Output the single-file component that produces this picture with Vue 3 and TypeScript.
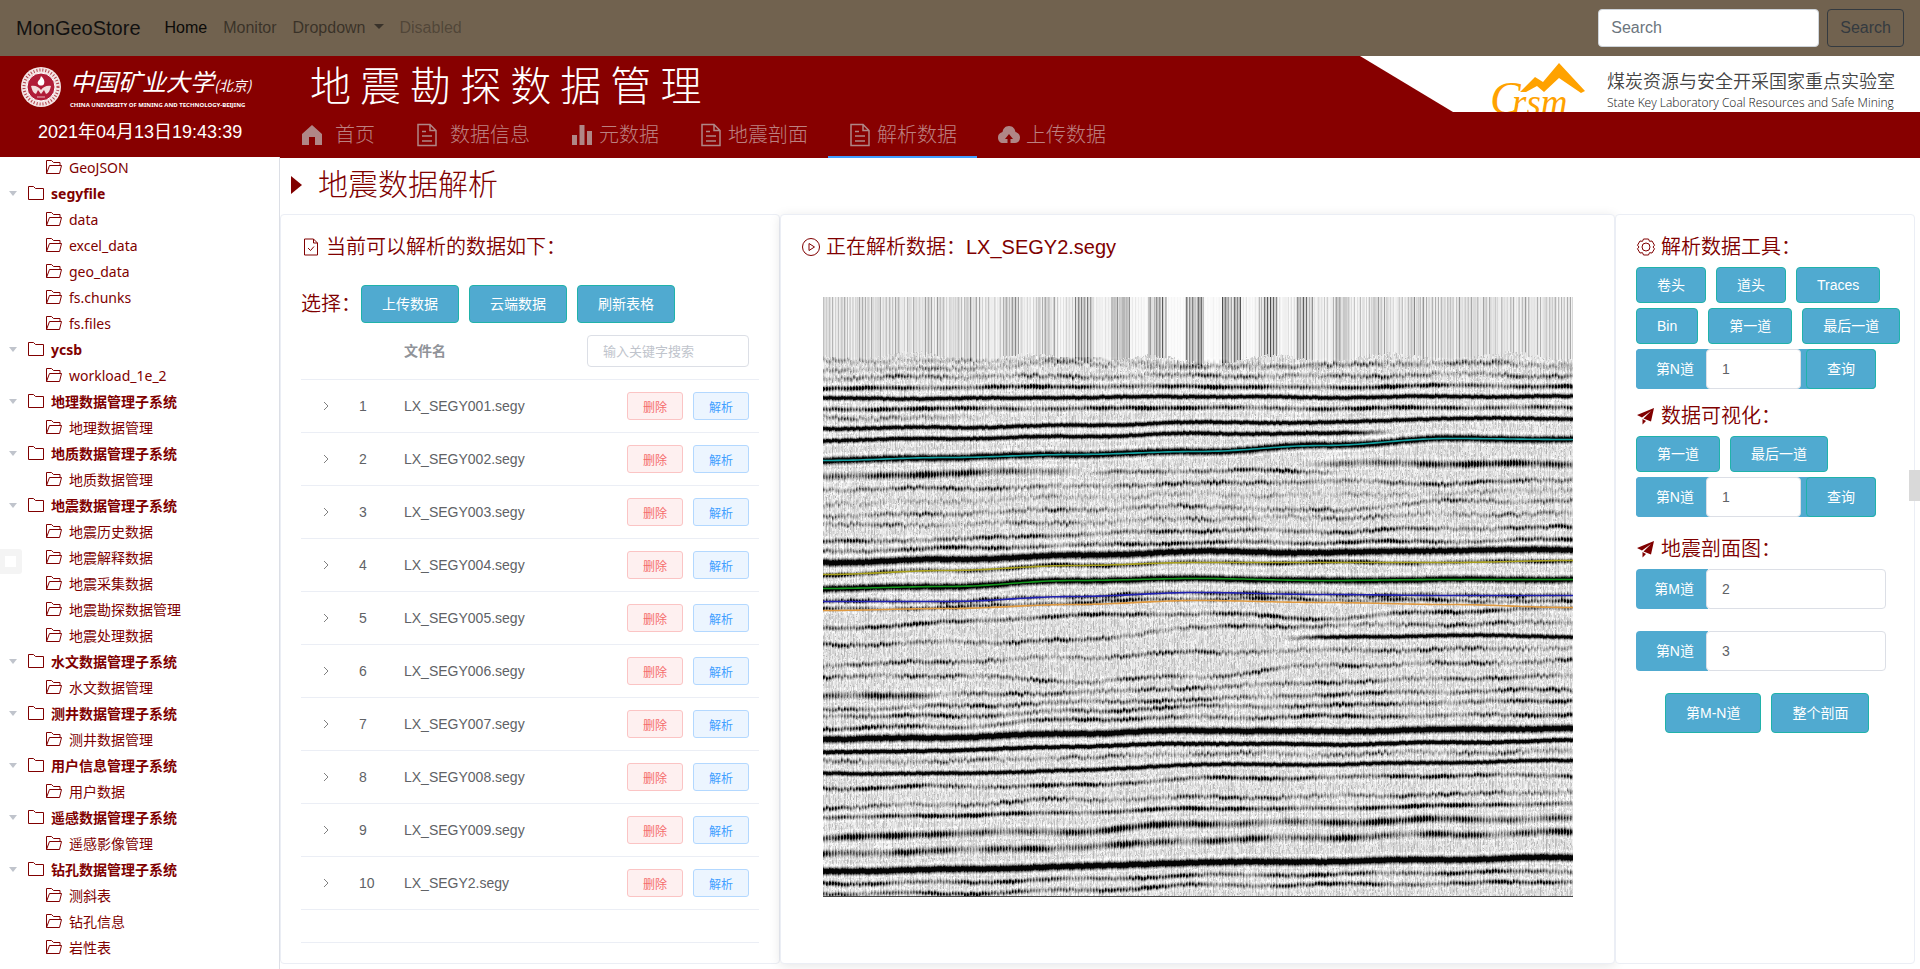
<script setup lang="ts">
import { onMounted, ref } from 'vue'

interface TreeNode {
  label: string
  root?: boolean
}

const tree: TreeNode[] = [
  { label: 'GeoJSON' },
  { label: 'segyfile', root: true },
  { label: 'data' },
  { label: 'excel_data' },
  { label: 'geo_data' },
  { label: 'fs.chunks' },
  { label: 'fs.files' },
  { label: 'ycsb', root: true },
  { label: 'workload_1e_2' },
  { label: '地理数据管理子系统', root: true },
  { label: '地理数据管理' },
  { label: '地质数据管理子系统', root: true },
  { label: '地质数据管理' },
  { label: '地震数据管理子系统', root: true },
  { label: '地震历史数据' },
  { label: '地震解释数据' },
  { label: '地震采集数据' },
  { label: '地震勘探数据管理' },
  { label: '地震处理数据' },
  { label: '水文数据管理子系统', root: true },
  { label: '水文数据管理' },
  { label: '测井数据管理子系统', root: true },
  { label: '测井数据管理' },
  { label: '用户信息管理子系统', root: true },
  { label: '用户数据' },
  { label: '遥感数据管理子系统', root: true },
  { label: '遥感影像管理' },
  { label: '钻孔数据管理子系统', root: true },
  { label: '测斜表' },
  { label: '钻孔信息' },
  { label: '岩性表' },
]

const menu = [
  { label: '首页', icon: 'home', wide: true },
  { label: '数据信息', icon: 'doc', wide: true },
  { label: '元数据', icon: 'bars' },
  { label: '地震剖面', icon: 'doc' },
  { label: '解析数据', icon: 'doc', active: true },
  { label: '上传数据', icon: 'cloud' },
]

const files = [
  'LX_SEGY001.segy',
  'LX_SEGY002.segy',
  'LX_SEGY003.segy',
  'LX_SEGY004.segy',
  'LX_SEGY005.segy',
  'LX_SEGY006.segy',
  'LX_SEGY007.segy',
  'LX_SEGY008.segy',
  'LX_SEGY009.segy',
  'LX_SEGY2.segy',
]

const traceNo = ref('1')
const viewNo = ref('1')
const sectionM = ref('2')
const sectionN = ref('3')
const navKeyword = ref('')
const keyword = ref('')

const section = ref<HTMLCanvasElement | null>(null)

/* A reflector: depths at seven evenly spaced traces, strength, thickness,
   and the stretch of the section in which it is visible. */
interface Reflector {
  y: number[]
  s: number
  t: number
  from?: number
  to?: number
}

const reflectors: Reflector[] = [
  { y: [63, 64, 62, 67, 69, 64, 70], s: 0.25, t: 2 },
  { y: [72, 71, 66, 70, 68, 66, 67], s: 0.35, t: 2 },
  { y: [81, 79, 79, 78, 79, 77, 78], s: 0.55, t: 2 },
  { y: [91, 90, 89, 89, 90, 88, 89], s: 1.05, t: 2 },
  { y: [101, 101, 100, 99, 100, 99, 99], s: 1.2, t: 2 },
  { y: [112, 111, 111, 110, 111, 110, 110], s: 1.05, t: 2 },
  { y: [120, 120, 120, 119, 119, 118, 118], s: 0.4, t: 2, to: 170 },
  { y: [131, 130, 128, 125, 125, 121, 121], s: 1.2, t: 2 },
  { y: [143, 141, 139, 136, 136, 132, 130], s: 1.2, t: 2, to: 570 },
  { y: [163, 160, 157, 154, 148, 141, 142], s: 1.4, t: 3 },
  { y: [180, 176, 173, 167, 167, 166, 167], s: 1, t: 3, to: 255 },
  { y: [180, 178, 176, 173, 174, 176, 178], s: 0.8, t: 2, from: 260, to: 520 },
  { y: [180, 176, 168, 166, 166, 166, 167], s: 1, t: 3, from: 480 },
  { y: [192, 191, 189, 186, 184, 186, 182], s: 0.65, t: 2 },
  { y: [206, 204, 200, 197, 198, 196, 192], s: 0.25, t: 2 },
  { y: [219, 216, 212, 209, 213, 204, 203], s: 0.55, t: 2 },
  { y: [228, 227, 225, 221, 220, 217, 216], s: 0.45, t: 2 },
  { y: [244, 242, 237, 233, 234, 231, 230], s: 0.75, t: 2 },
  { y: [254, 251, 248, 245, 245, 244, 242], s: 0.85, t: 2 },
  { y: [265, 262, 258, 254, 255, 253, 252], s: 1.4, t: 3 },
  { y: [277, 273, 268, 265, 265, 265, 263], s: 1, t: 2 },
  { y: [291, 289, 283, 281, 283, 282, 282], s: 1.35, t: 3 },
  { y: [304, 304, 299, 295, 297, 298, 298], s: 0.8, t: 2 },
  { y: [312, 310, 305, 301, 302, 303, 304], s: 0.8, t: 2 },
  { y: [331, 325, 318, 316, 321, 314, 311], s: 0.85, t: 2 },
  { y: [347, 345, 343, 330, 328, 327, 325], s: 0.65, t: 2 },
  { y: [352, 350, 346, 342, 340, 338, 339], s: 1.15, t: 2, from: 460 },
  { y: [368, 364, 360, 355, 353, 352, 350], s: 0.6, t: 2 },
  { y: [380, 378, 384, 379, 368, 366, 363], s: 0.65, t: 2 },
  { y: [399, 397, 395, 389, 383, 380, 377], s: 1, t: 3, to: 120 },
  { y: [399, 397, 395, 390, 385, 381, 379], s: 0.65, t: 2, from: 90 },
  { y: [412, 409, 405, 402, 397, 394, 392], s: 0.7, t: 2 },
  { y: [418, 419, 414, 409, 408, 405, 403], s: 0.75, t: 2 },
  { y: [431, 429, 422, 420, 419, 418, 417], s: 0.8, t: 2 },
  { y: [442, 440, 436, 433, 434, 432, 431], s: 1.45, t: 3 },
  { y: [455, 453, 449, 446, 447, 445, 443], s: 1.4, t: 2 },
  { y: [464, 464, 460, 456, 457, 455, 454], s: 0.5, t: 2 },
  { y: [476, 476, 473, 467, 467, 465, 463], s: 1.15, t: 2 },
  { y: [491, 489, 488, 481, 480, 478, 478], s: 0.9, t: 2 },
  { y: [510, 507, 502, 500, 499, 497, 494], s: 0.65, t: 2 },
  { y: [520, 518, 515, 511, 511, 508, 506], s: 1.05, t: 2 },
  { y: [541, 536, 534, 526, 525, 522, 521], s: 1, t: 3 },
  { y: [557, 553, 550, 543, 540, 537, 535], s: 0.9, t: 3 },
  { y: [574, 572, 569, 565, 564, 562, 560], s: 1.5, t: 3 },
  { y: [586, 585, 582, 578, 577, 575, 574], s: 0.85, t: 2 },
  { y: [596, 596, 593, 588, 587, 586, 584], s: 0.85, t: 2 },
]

const picks = [
  { color: '#14a0a0', y: [163, 160, 157, 154, 148, 141, 142] },
  { color: '#a8a01c', y: [277, 273, 268, 265, 265, 265, 263] },
  { color: '#12961c', y: [291, 289, 283, 281, 283, 282, 282] },
  { color: '#2020b4', y: [304, 304, 299, 295, 297, 298, 298] },
  { color: '#e09a40', y: [313, 311, 307, 303, 305, 307, 310] },
]

const STEP = 125

function depthAt(y: number[], x: number): number {
  const i = Math.min(5, Math.floor(x / STEP))
  const f = x / STEP - i
  const k = (1 - Math.cos(f * Math.PI)) / 2
  return y[i] * (1 - k) + y[i + 1] * k
}

function makeRandom(seed: number): () => number {
  let a = seed
  return () => {
    a = (a + 0x6d2b79f5) | 0
    let t = Math.imul(a ^ (a >>> 15), 1 | a)
    t = (t + Math.imul(t ^ (t >>> 7), 61 | t)) ^ t
    return ((t ^ (t >>> 14)) >>> 0) / 4294967296
  }
}

onMounted(() => {
  const canvas = section.value
  const ctx = canvas?.getContext('2d')
  if (!canvas || !ctx) return
  const w = canvas.width
  const h = canvas.height
  const rnd = makeRandom(20210413)
  const dark = new Float32Array(w * h)

  for (let x = 0; x < w; x++) {
    const trace = x % 3 === 0 ? 1 : x % 3 === 1 ? 0.6 : 0.35
    const cluster = x > 140 && x < 620 && (x + 8) % 37 < 19
    const mid = Math.max(0, 1 - Math.abs(x - 370) / 260)
    const base = cluster ? 0.14 + 0.12 * mid : 0.13 - 0.12 * mid
    const stripe = base * (0.3 + rnd() * 1) + (x % 3 === 0 ? base * rnd() * 2 : 0)
    const top = 57 + 4 * Math.sin(x / 19) + 4 * mid + rnd() * 4
    let run = rnd()
    for (let y = 0; y < h; y++) {
      if (y < top) {
        dark[y * w + x] = stripe
        continue
      }
      if (rnd() < 0.45) run = rnd()
      dark[y * w + x] = 0.04 + run * 0.18 * (0.5 + trace)
    }
  }

  reflectors.forEach((r, n) => {
    const weak = Math.max(0, 1 - r.s)
    const from = r.from ?? 0
    const to = r.to ?? w
    let jitter = 0
    for (let x = from; x < to; x++) {
      if (x % 3 === 0) jitter = (rnd() - 0.5) * (0.8 + 4 * weak)
      const rise = r.from ? Math.min(1, (x - from) / 50) : 1
      const fall = r.to ? Math.min(1, (to - x) / 50) : 1
      const trace = x % 3 === 0 ? 1 : x % 3 === 1 ? 0.75 : 0.4
      const wave = 0.75 + 0.3 * Math.sin(x / (17 + (n % 7) * 4) + n * 2.3)
      const fade = 0.8 + 0.25 * Math.sin(x / 7 + n * 5)
      const amp = r.s * rise * fall * (r.s > 1.1 ? 0.75 + 0.25 * trace : trace * wave * fade * 1.4)
      const c = depthAt(r.y, x) + jitter + (r.s > 1 ? 0.4 : 0.9) * Math.sin(x / 23 + n)
      for (let y = Math.floor(c - 7); y <= c + 7; y++) {
        if (y < 60 || y >= h) continue
        const d = (y - c) / r.t
        const side = Math.abs(d) - 2
        dark[y * w + x] += amp * Math.exp(-d * d) - 0.06 * r.s * Math.exp(-side * side * 2)
      }
    }
  })

  const image = ctx.createImageData(w, h)
  for (let i = 0; i < w * h; i++) {
    const v = Math.max(4, Math.min(253, Math.round(255 * (1 - dark[i]))))
    image.data[i * 4] = v
    image.data[i * 4 + 1] = v
    image.data[i * 4 + 2] = v
    image.data[i * 4 + 3] = 255
  }
  ctx.putImageData(image, 0, 0)

  picks.forEach((p) => {
    ctx.strokeStyle = p.color
    ctx.lineWidth = 1.6
    ctx.beginPath()
    for (let x = 0; x <= w; x += 5) ctx.lineTo(x, depthAt(p.y, x) + 0.5)
    ctx.stroke()
  })
  ctx.fillStyle = '#444'
  ctx.fillRect(0, h - 1, w, 1)
})
</script>

<template>
  <div class="page">
    <nav class="navbar">
      <a class="brand" href="#">MonGeoStore</a>
      <a class="nav-link current" href="#">Home</a>
      <a class="nav-link" href="#">Monitor</a>
      <a class="nav-link" href="#">Dropdown<span class="caret"></span></a>
      <a class="nav-link disabled" href="#">Disabled</a>
      <form class="nav-search" @submit.prevent>
        <input v-model="navKeyword" type="search" placeholder="Search" aria-label="Search" />
        <button type="submit">Search</button>
      </form>
    </nav>

    <div class="shell">
      <aside class="sidebar">
        <div class="school">
          <div class="school-logo">
            <svg class="seal" viewBox="0 0 42 42" aria-hidden="true">
              <circle cx="21" cy="21" r="20" fill="#f3e4e4" />
              <circle cx="21" cy="21" r="17" fill="none" stroke="#b4404a" stroke-width="3" stroke-dasharray="1 2" />
              <circle cx="21" cy="21" r="14" fill="#b01c38" stroke="#fff" stroke-width="1" />
              <path d="M21 10c3 3 4 5 3 8-1 2-5 2-6 0s1-4 2-5z" fill="#fff" />
              <path d="M11 20c4-1 8 1 10 4 2-3 6-5 10-4-1 4-2 7-5 8l-2-4-3 4-3-4-2 4c-3-1-4-4-5-8z" fill="#f3dede" />
              <path d="M17 31h8" stroke="#e8b8c0" stroke-width="1" />
            </svg>
            <div class="school-text">
              <div class="school-name">中国矿业大学<small>(北京)</small></div>
              <div class="school-en">CHINA UNIVERSITY OF MINING AND TECHNOLOGY-BEIJING</div>
            </div>
          </div>
          <div class="clock">2021年04月13日19:43:39</div>
        </div>
        <ul class="tree">
          <li v-for="node in tree" :key="node.label" :class="{ root: node.root }">
            <span v-if="node.root" class="tree-caret"></span>
            <svg v-if="node.root" class="folder" viewBox="0 0 16 14" aria-hidden="true">
              <path d="M.5 13.500V.5h5l2 2h8v11z" />
            </svg>
            <svg v-else class="folder" viewBox="0 0 16 14" aria-hidden="true">
              <path d="M.5 13.500V.5h5l2 2h6.500v3M.5 13.500l3-8h12l-2 8z" />
            </svg>
            <span>{{ node.label }}</span>
          </li>
        </ul>
      </aside>

      <main class="main">
        <header class="banner">
          <h1>地 震 勘 探 数 据 管 理</h1>
          <div class="lab">
            <svg class="lab-logo" viewBox="0 0 100 56" aria-hidden="true">
              <path d="M30 36 45 21l8 5L69 7l26 28-4 2-22-15-15 14-7-6-11 6z" fill="#ffa200" />
              <text x="0" y="58" font-size="46" class="script">C</text>
              <text x="22" y="59" font-size="37" class="script">rsm</text>
            </svg>
            <div class="lab-text">
              <div class="lab-cn">煤炭资源与安全开采国家重点实验室</div>
              <div class="lab-en">State Key Laboratory Coal Resources and Safe Mining</div>
            </div>
          </div>
          <nav class="menu">
            <a v-for="m in menu" :key="m.label" href="#" :class="{ active: m.active, wide: m.wide }">
              <svg v-if="m.icon === 'home'" viewBox="0 0 24 24" aria-hidden="true">
                <path d="M12 2 2 11v11h7v-8h6v8h7V11z" fill="currentColor" />
              </svg>
              <svg v-else-if="m.icon === 'doc'" viewBox="0 0 24 24" aria-hidden="true">
                <path d="M3 1.500h12l6 6v15H3zM15 1.500v6h6M7 8.500h4M7 13h10M7 18h10" fill="none" stroke="currentColor" stroke-width="1.500" />
              </svg>
              <svg v-else-if="m.icon === 'bars'" viewBox="0 0 24 24" aria-hidden="true">
                <path d="M2 12h5v10H2zM9.500 2h5v20h-5zM17 8h5v14h-5z" fill="currentColor" />
              </svg>
              <svg v-else viewBox="0 0 24 24" aria-hidden="true">
                <path fill-rule="evenodd" d="M12 3c4 0 6 3 6.500 6C22 10 23 12 23 14.500 23 18 21 20 18 20h-4.500v-4H16l-4-5-4 5h2.500v4H6c-3 0-5-2-5-5.500C1 12 2 10 5.500 9 6 6 8 3 12 3z" fill="currentColor" />
              </svg>
              <span>{{ m.label }}</span>
            </a>
          </nav>
        </header>

        <h2 class="page-title">地震数据解析</h2>

        <div class="cards">
          <section class="card list">
            <h3>
              <svg viewBox="0 0 20 20" aria-hidden="true">
                <path d="M3.500 2h9l4 4v12h-13zM12.500 2v4h4M7 11l2.500 2.500L13 9.500" />
              </svg>
              当前可以解析的数据如下：
            </h3>
            <div class="choose">
              <span>选择：</span>
              <button class="btn tall">上传数据</button>
              <button class="btn tall">云端数据</button>
              <button class="btn tall">刷新表格</button>
            </div>
            <div class="table-box">
              <table>
                <thead>
                  <tr>
                    <th class="c-open"></th>
                    <th class="c-no"></th>
                    <th>文件名</th>
                    <th class="c-ops">
                      <input v-model="keyword" class="filter" type="text" placeholder="输入关键字搜索" aria-label="输入关键字搜索" />
                    </th>
                  </tr>
                </thead>
                <tbody>
                  <tr v-for="(f, i) in files" :key="f">
                    <td class="c-open">
                      <svg viewBox="0 0 12 12" aria-hidden="true"><path d="m4 2 4 4-4 4" /></svg>
                    </td>
                    <td>{{ i + 1 }}</td>
                    <td>{{ f }}</td>
                    <td class="c-ops">
                      <button class="mini danger">删除</button>
                      <button class="mini primary">解析</button>
                    </td>
                  </tr>
                </tbody>
              </table>
            </div>
          </section>

          <section class="card view">
            <h3>
              <svg viewBox="0 0 20 20" aria-hidden="true">
                <circle cx="10" cy="10" r="8.500" />
                <path d="m8 6.500 5.500 3.500L8 13.500z" />
              </svg>
              正在解析数据：LX_SEGY2.segy
            </h3>
            <canvas ref="section" width="750" height="600" role="img" aria-label="LX_SEGY2.segy"></canvas>
          </section>

          <section class="card tools">
            <h3>
              <svg viewBox="0 0 20 20" aria-hidden="true">
                <path d="M7.500 2h5l1 2.300 2.500-.3 2.500 4.200L17 10l1.500 1.800L16 16l-2.500-.3-1 2.300h-5l-1-2.300L4 16l-2.500-4.200L3 10 1.500 8.200 4 4l2.500.3z" />
                <circle cx="10" cy="10" r="4" />
              </svg>
              解析数据工具：
            </h3>
            <div class="row">
              <button class="btn">卷头</button>
              <button class="btn">道头</button>
              <button class="btn">Traces</button>
            </div>
            <div class="row">
              <button class="btn">Bin</button>
              <button class="btn">第一道</button>
              <button class="btn">最后一道</button>
            </div>
            <div class="group query">
              <label for="trace-no">第N道</label>
              <input id="trace-no" v-model="traceNo" type="text" />
              <button class="btn">查询</button>
            </div>

            <h3 class="second">
              <svg class="solid" viewBox="0 0 20 20" aria-hidden="true">
                <path d="M18 2 1 9l5 2.500L15 5 7.500 12.500l7.500 3zM6.500 13v5.500L10 15z" />
              </svg>
              数据可视化：
            </h3>
            <div class="row">
              <button class="btn">第一道</button>
              <button class="btn">最后一道</button>
            </div>
            <div class="group query">
              <label for="view-no">第N道</label>
              <input id="view-no" v-model="viewNo" type="text" />
              <button class="btn">查询</button>
            </div>

            <h3 class="third">
              <svg class="solid" viewBox="0 0 20 20" aria-hidden="true">
                <path d="M18 2 1 9l5 2.500L15 5 7.500 12.500l7.500 3zM6.500 13v5.500L10 15z" />
              </svg>
              地震剖面图：
            </h3>
            <div class="group range">
              <label for="section-m">第M道</label>
              <input id="section-m" v-model="sectionM" type="text" />
            </div>
            <div class="group range">
              <label for="section-n">第N道</label>
              <input id="section-n" v-model="sectionN" type="text" />
            </div>
            <div class="row final">
              <button class="btn">第M-N道</button>
              <button class="btn">整个剖面</button>
            </div>
          </section>
        </div>
      </main>
    </div>

    <div class="drag-handle"></div>
    <div class="side-tab"></div>
  </div>
</template>

<style>
body {
  margin: 0;
  background: #fff;
}
</style>

<style scoped>
.page,
.page * {
  box-sizing: border-box;
}

.page {
  position: relative;
  min-height: 100vh;
  display: flex;
  flex-direction: column;
  overflow: hidden;
  font-family: "Liberation Sans", "Noto Sans CJK SC", sans-serif;
  font-size: 14px;
}

button,
input {
  font-family: inherit;
  margin: 0;
}

input {
  outline: none;
}

h1,
h2,
h3,
ul {
  margin: 0;
  padding: 0;
  font-weight: 300;
}

a {
  text-decoration: none;
}

.navbar {
  display: flex;
  align-items: center;
  height: 56px;
  padding: 0 16px;
  background: #71624f;
  font-size: 16px;
  line-height: 24px;
}

.brand {
  margin-right: 16px;
  font-size: 20px;
  color: #111;
}

.nav-link {
  padding: 0 8px;
  color: rgba(0, 0, 0, 0.5);
}

.nav-link.current {
  color: #0b0a08;
}

.nav-link.disabled {
  color: rgba(0, 0, 0, 0.3);
}

.caret {
  display: inline-block;
  margin-left: 8px;
  vertical-align: 4px;
  border: 5px solid transparent;
  border-top-color: #39322a;
  border-bottom: 0;
}

.nav-search {
  display: flex;
  gap: 8px;
  margin-left: auto;
}

.nav-search input {
  width: 221px;
  height: 38px;
  padding: 0 12px;
  border: 1px solid #ced4da;
  border-radius: 4px;
  background: #fff;
  font-size: 16px;
}

.nav-search input::placeholder {
  color: #6c757d;
}

.nav-search button {
  height: 38px;
  padding: 0 12px;
  border: 1px solid #343a40;
  border-radius: 4px;
  background: transparent;
  color: #343a40;
  font-size: 16px;
}

.shell {
  flex: 1;
  display: flex;
}

.sidebar {
  flex: 0 0 280px;
  border-right: 1px solid #dcdfe6;
}

.school {
  position: relative;
  height: 101px;
  margin-right: -1px;
  padding-top: 10px;
  background: #870000;
  color: #fff;
}

.school-logo {
  display: flex;
  gap: 8px;
  padding-left: 20px;
}

.seal {
  width: 42px;
  height: 42px;
}

.school-text {
  white-space: nowrap;
}

.school-name {
  font-family: "Noto Sans CJK SC", sans-serif;
  font-size: 24px;
  line-height: 30px;
  font-style: italic;
}

.school-name small {
  font-size: 14px;
}

.school-en {
  font-family: "Noto Sans", sans-serif;
  font-size: 6px;
  line-height: 10px;
  font-weight: 700;
}

.clock {
  margin-top: 10px;
  padding-left: 38px;
  font-size: 18px;
  line-height: 24px;
}

.tree {
  margin-top: -3px;
  list-style: none;
  color: #800000;
  font-family: "Noto Sans", "Noto Sans CJK SC", sans-serif;
  font-size: 14px;
  font-weight: 400;
}

.tree li {
  display: flex;
  align-items: center;
  height: 26px;
  padding-left: 46px;
}

.tree li.root {
  padding-left: 9px;
  font-weight: 700;
}

.tree-caret {
  margin-right: 11px;
  border: 4px solid transparent;
  border-top: 5px solid #c0c4cc;
  border-bottom: 0;
}

.folder {
  width: 16px;
  height: 14px;
  margin-right: 7px;
  fill: none;
  stroke: currentColor;
}

.main {
  flex: 1;
  min-width: 0;
}

.banner {
  display: grid;
  grid-template: 56px 46px / 1fr 560px;
  background: #870000;
}

.banner h1 {
  padding-left: 30px;
  font-family: "Noto Sans CJK SC", sans-serif;
  font-size: 41px;
  line-height: 54px;
  color: #fff;
  white-space: nowrap;
}

.lab {
  display: flex;
  gap: 17px;
  height: 56px;
  overflow: hidden;
  padding-left: 130px;
  background: #fff;
  clip-path: polygon(0 0, 100% 0, 100% 100%, 93px 100%);
  color: #444;
  white-space: nowrap;
}

.lab-logo {
  flex: none;
  width: 100px;
  height: 56px;
}

.script {
  font-family: "Liberation Serif", serif;
  font-style: italic;
  fill: #ffa200;
}

.lab-cn {
  margin-top: 14px;
  font-size: 18px;
  line-height: 24px;
  font-weight: 350;
}

.lab-en {
  font-family: "Open Sans", sans-serif;
  font-size: 12px;
  line-height: 18px;
  font-weight: 300;
  color: #111;
}

.menu {
  grid-column: 1 / -1;
  display: flex;
}

.menu a {
  display: flex;
  align-items: center;
  gap: 5px;
  padding: 2px 20px 0;
  border-bottom: 2px solid transparent;
  color: #bc8080;
  font-size: 20px;
  line-height: 40px;
  font-weight: 300;
}

.menu a.wide {
  gap: 11px;
}

.menu a.active {
  border-color: #409eff;
}

.menu svg {
  width: 24px;
  height: 24px;
  color: #b08686;
}

.page-title {
  display: flex;
  align-items: center;
  gap: 16px;
  height: 56px;
  padding: 0 0 2px 11px;
  font-size: 30px;
  line-height: 44px;
  color: #800000;
}

.page-title::before {
  content: "";
  border: 9px solid transparent;
  border-left: 11px solid #800000;
  border-right: 0;
}

.cards {
  display: flex;
  padding: 0 5px 5px 0;
}

.card {
  padding: 20px;
  border: 1px solid #ebeef5;
  border-radius: 4px;
  background: #fff;
}

.list {
  flex: 0 0 500px;
}

.view {
  flex: 1;
  min-width: 0;
  box-shadow: 0 2px 12px rgba(0, 0, 0, 0.1);
}

.tools {
  flex: 0 0 300px;
  min-width: 0;
}

.card h3 {
  display: flex;
  align-items: center;
  gap: 5px;
  font-size: 20px;
  line-height: 24px;
  font-weight: 350;
  color: #800000;
  white-space: nowrap;
}

.card h3 svg {
  width: 20px;
  height: 20px;
  fill: none;
  stroke: currentColor;
}

.card h3 svg.solid {
  fill: currentColor;
  stroke: none;
}

.view canvas {
  display: block;
  max-width: 100%;
  margin: 38px auto 0;
}

.btn {
  height: 36px;
  padding: 0 20px;
  border: 1px solid #20b2aa;
  border-radius: 4px;
  background: #50aad0;
  color: #fff;
  font-size: 14px;
  line-height: 20px;
  white-space: nowrap;
}

.btn.tall {
  height: 38px;
}

.choose {
  display: flex;
  align-items: center;
  gap: 10px;
  margin-top: 26px;
  color: #800000;
  font-size: 20px;
  line-height: 24px;
  font-weight: 350;
}

.choose span {
  width: 50px;
  white-space: nowrap;
}

.table-box {
  height: 620px;
  border-bottom: 1px solid #ebeef5;
}

table {
  width: 100%;
  table-layout: fixed;
  border-collapse: separate;
  border-spacing: 0;
  color: #606266;
}

th,
td {
  height: 53px;
  padding: 0 10px;
  border-bottom: 1px solid #ebeef5;
  text-align: left;
  line-height: 23px;
  white-space: nowrap;
}

th {
  height: 57px;
  color: #909399;
}

.c-open {
  width: 48px;
}

.c-no {
  width: 45px;
}

.c-ops {
  width: 182px;
  text-align: right;
}

td.c-open {
  padding: 0 0 0 19px;
}

td.c-open svg {
  display: block;
  width: 12px;
  height: 12px;
  fill: none;
  stroke: #808080;
}

.filter {
  display: block;
  width: 100%;
  height: 32px;
  padding: 0 15px;
  border: 1px solid #dcdfe6;
  border-radius: 4px;
  font-size: 13px;
}

.filter::placeholder {
  color: #c0c4cc;
}

td.c-ops {
  font-size: 0;
}

.mini {
  width: 56px;
  height: 28px;
  padding: 0;
  border: 1px solid;
  border-radius: 3px;
  font-size: 12px;
  vertical-align: middle;
}

.mini + .mini {
  margin-left: 10px;
}

.danger {
  background: #fef0f0;
  border-color: #fbc4c4;
  color: #f56c6c;
}

.primary {
  background: #ecf5ff;
  border-color: #b3d8ff;
  color: #409eff;
}

.row {
  display: flex;
  gap: 10px;
  margin-top: 5px;
}

.card h3 + .row,
.card h3 + .group {
  margin-top: 8px;
}

.group {
  display: flex;
  height: 40px;
  margin-top: 5px;
  border-radius: 4px;
}

.group label {
  flex: 0 0 72px;
  margin-right: -2px;
  padding-right: 14px;
  border-radius: 4px 0 0 4px;
  background: #50aad0;
  color: #fff;
  text-align: right;
  line-height: 40px;
}

.group input {
  min-width: 0;
  flex: 1;
  padding: 0 15px;
  border: 1px solid #dcdfe6;
  border-radius: 4px;
  background: #fff;
  color: #606266;
  font-size: 14px;
}

.group .btn {
  height: 40px;
  margin-left: 5px;
}

.query {
  width: 240px;
  background: #50aad0;
}

.range {
  width: 250px;
}

.range + .range {
  margin-top: 22px;
}

.second {
  padding-top: 15px;
}

.third {
  padding-top: 20px;
}

.card .final {
  margin: 22px 0 0 29px;
}

.final .btn {
  height: 40px;
}

.drag-handle {
  position: absolute;
  top: 549px;
  left: 0;
  width: 22px;
  height: 25px;
  border: 6px solid #f4f4f4;
  border-width: 7px 6px 7px 5px;
  border-radius: 0 3px 3px 0;
  background: #fff;
}

.side-tab {
  position: absolute;
  top: 470px;
  right: 0;
  width: 11px;
  height: 31px;
  background: #d9d9d9;
}
</style>
